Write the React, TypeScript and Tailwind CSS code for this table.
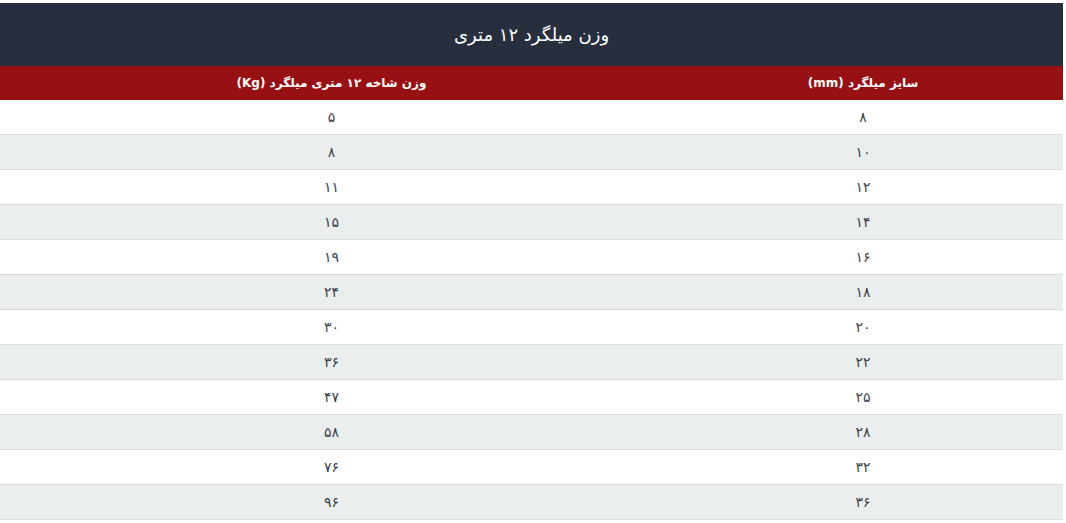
const rows: [string, string][] = [
  ['۸', '۵'],
  ['۱۰', '۸'],
  ['۱۲', '۱۱'],
  ['۱۴', '۱۵'],
  ['۱۶', '۱۹'],
  ['۱۸', '۲۴'],
  ['۲۰', '۳۰'],
  ['۲۲', '۳۶'],
  ['۲۵', '۴۷'],
  ['۲۸', '۵۸'],
  ['۳۲', '۷۶'],
  ['۳۶', '۹۶'],
];

export default function App() {
  return (
    <div
      dir="rtl"
      className="min-h-screen bg-white pt-[3px]"
      style={{ fontFamily: '"DejaVu Sans", "Noto Sans", sans-serif' }}
    >
      <div className="w-[1063px] ml-auto mr-[3px]">
        {/* Title */}
        <div className="h-[63px] bg-[#272e3e] flex items-center justify-center">
          <h2 className="text-white text-[18px] font-medium">وزن میلگرد ۱۲ متری</h2>
        </div>

        {/* Column headers */}
        <div className="h-[34px] bg-[#971114] flex text-white text-[12px] font-bold">
          <div className="w-[400px] flex items-center justify-center">سایز میلگرد (mm)</div>
          <div className="flex-1 flex items-center justify-center">وزن شاخه ۱۲ متری میلگرد (Kg)</div>
        </div>

        {/* Body */}
        {rows.map(([size, weight], i) => (
          <div
            key={size}
            className={`h-[35px] flex text-[14px] text-[#3b3f4a] border-b border-[#dcdcdc] ${
              i % 2 === 1 ? 'bg-[#ebeeef]' : 'bg-white'
            }`}
          >
            <div className="w-[400px] flex items-center justify-center">{size}</div>
            <div className="flex-1 flex items-center justify-center">{weight}</div>
          </div>
        ))}
      </div>
    </div>
  );
}
